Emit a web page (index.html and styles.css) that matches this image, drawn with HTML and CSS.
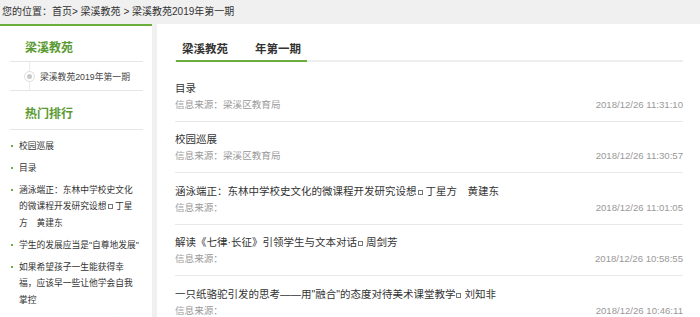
FILE: index.html
```html
<!DOCTYPE html>
<html lang="zh-CN">
<head>
<meta charset="utf-8">
<title>梁溪教苑2019年第一期</title>
<link rel="stylesheet" href="styles.css">
</head>
<body>
<div class="crumb">您的位置：首页&gt; 梁溪教苑 &gt; 梁溪教苑2019年第一期</div>
<div class="wrap">
  <aside class="side">
    <h2 class="side-title">梁溪教苑</h2>
    <div class="sub">
      <span class="node"><span class="dot"></span></span>
      <span class="sub-text">梁溪教苑2019年第一期</span>
    </div>
    <h2 class="side-title hot">热门排行</h2>
    <ul class="hot-list">
      <li>校园巡展</li>
      <li>目录</li>
      <li>涵泳端正：东林中学校史文化的微课程开发研究设想<span class="box"></span> 丁星方　黄建东</li>
      <li>学生的发展应当是"自尊地发展"</li>
      <li>如果希望孩子一生能获得幸福，应该早一些让他学会自我掌控</li>
      <li>解读《七律·长征》引领学生与文本对话<span class="box"></span> 周剑芳</li>
    </ul>
  </aside>
  <main class="main">
    <div class="tabs"><span class="tab"><span>梁溪教苑</span><span>年第一期</span></span></div>
    <ul class="news">
      <li class="item">
        <div class="title">目录</div>
        <div class="meta"><span>信息来源：梁溪区教育局</span><span>2018/12/26 11:31:10</span></div>
      </li>
      <li class="item">
        <div class="title">校园巡展</div>
        <div class="meta"><span>信息来源：梁溪区教育局</span><span>2018/12/26 11:30:57</span></div>
      </li>
      <li class="item">
        <div class="title">涵泳端正：东林中学校史文化的微课程开发研究设想<span class="box"></span> 丁星方　黄建东</div>
        <div class="meta"><span>信息来源：</span><span>2018/12/26 11:01:05</span></div>
      </li>
      <li class="item">
        <div class="title">解读《七律·长征》引领学生与文本对话<span class="box"></span> 周剑芳</div>
        <div class="meta"><span>信息来源：</span><span>2018/12/26 10:58:55</span></div>
      </li>
      <li class="item">
        <div class="title">一只纸骆驼引发的思考——用"融合"的态度对待美术课堂教学<span class="box"></span> 刘知非</div>
        <div class="meta"><span>信息来源：</span><span>2018/12/26 10:46:11</span></div>
      </li>
    </ul>
  </main>
</div>
</body>
</html>
```
FILE: styles.css
```css
* { box-sizing: border-box; }
html, body {
  margin: 0;
  padding: 0;
  height: 317px;
  overflow: hidden;
}
body {
  background: #f0f0f0;
  font-family: "Liberation Sans", "Noto Sans CJK SC", sans-serif;
  color: #333;
}
ul { list-style: none; margin: 0; padding: 0; }
h2 { margin: 0; font-weight: normal; }

.crumb {
  height: 24px;
  line-height: 24px;
  font-size: 10px;
  padding-left: 2px;
  color: #333;
}

.wrap {
  display: flex;
  gap: 5px;
  height: 293px;
}

.side {
  width: 152px;
  flex: none;
  background: #fff;
  border-top: 2px solid #6aae3c;
  padding: 0 9px 0 10px;
}
.side-title {
  font-size: 12px;
  font-weight: bold;
  color: #5a9a32;
  line-height: 20px;
  padding: 12px 0 3px 15px;
  border-bottom: 1px solid #e6e6e6;
}
.side-title.hot {
  padding-top: 13px;
  padding-bottom: 5px;
}
.sub {
  display: flex;
  align-items: center;
  height: 29px;
  border-bottom: 1px solid #e6e6e6;
  padding-left: 14px;
}
.node {
  position: relative;
  width: 11px;
  height: 28px;
  display: flex;
  align-items: center;
  justify-content: center;
  margin-right: 5px;
}
.node::before {
  content: "";
  position: absolute;
  left: 5px;
  top: 0;
  bottom: 0;
  width: 1px;
  background: #ececec;
}
.dot {
  position: relative;
  width: 11px;
  height: 11px;
  border: 1px solid #dcdcdc;
  border-radius: 50%;
  background: #fff;
  display: flex;
  align-items: center;
  justify-content: center;
}
.dot::after {
  content: "";
  width: 5px;
  height: 5px;
  border-radius: 50%;
  background: #c8c8c8;
}
.sub-text {
  font-size: 8.8px;
  color: #444;
}

.hot-list {
  padding: 7.5px 0 0 0;
}
.hot-list li {
  position: relative;
  font-size: 8.75px;
  line-height: 16.5px;
  padding-left: 9px;
  padding-right: 2px;
  margin-bottom: 5.5px;
  color: #333;
}
.hot-list li::before {
  content: "";
  position: absolute;
  left: 1px;
  top: 7.5px;
  width: 2px;
  height: 2px;
  background: #6aae3c;
}
.box {
  display: inline-block;
  width: 5px;
  height: 5px;
  border: 1px solid #777;
  margin-left: 1px;
  vertical-align: baseline;
}

.main {
  flex: 1;
  background: #fff;
  padding: 0 17px 0 18px;
}
.tabs {
  padding-top: 16px;
  border-bottom: 2px solid #eeeeee;
  display: flex;
}
.tab {
  display: flex;
  gap: 27px;
  padding: 0 6px 2px 6px;
  margin-left: 1px;
  margin-bottom: -2px;
  border-bottom: 2px solid #6aae3c;
  font-size: 11.5px;
  font-weight: bold;
  line-height: 18px;
  color: #333;
}
.news {
  margin-top: 8px;
}
.item {
  padding: 9.5px 0 9px 0;
  border-bottom: 1px solid #e8e8e8;
}
.title {
  font-size: 10.5px;
  line-height: 17px;
  color: #333;
}
.meta {
  display: flex;
  justify-content: space-between;
  font-size: 9.6px;
  line-height: 15px;
  color: #999;
}
```
